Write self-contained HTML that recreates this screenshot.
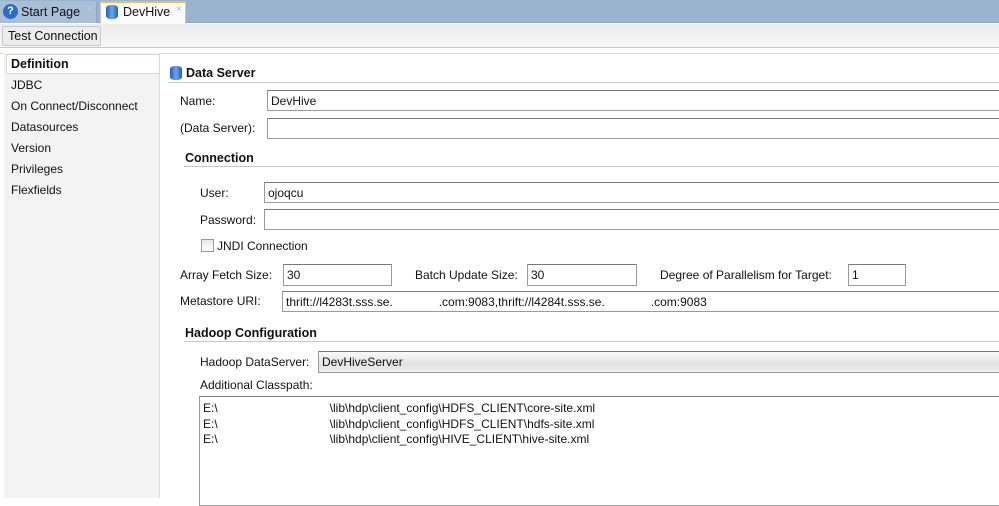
<!DOCTYPE html>
<html><head><meta charset="utf-8"><style>
*{margin:0;padding:0;box-sizing:border-box}
body{width:999px;height:498px;overflow:hidden;background:#fff;font-family:"Liberation Sans",sans-serif;font-size:12px;color:#111;position:relative}
.a{position:absolute;white-space:nowrap}
.in{position:absolute;border:1px solid #9a9a9a;border-top-color:#7a7a7a;background:#fff;padding-left:3px;line-height:20px}
.b{font-weight:bold;font-size:12.5px}
.ln{position:absolute;height:1px;background:#c8c8c8}
.l{transform:translateY(-50%)}
</style></head><body>
<div class="a" style="left:0;top:0;width:999px;height:23px;background:#9ab4d0;border-bottom:1px solid #8aa5c2"></div>
<div class="a" style="left:0;top:1px;width:97px;height:22px;background:#a9bfd8;border-right:1px solid #8ea8c4"></div>
<div class="a" style="left:3px;top:4px;width:15px;height:15px;border-radius:50%;background:#2b6cc4;color:#fff;font-weight:bold;font-size:11px;text-align:center;line-height:15px">?</div>
<div class="a" style="left:21px;top:5px;font-size:12.5px">Start Page</div>
<div class="a" style="left:87px;top:4px;color:#bcc;font-size:10px">×</div>
<div class="a" style="left:100px;top:1px;width:86px;height:23px;background:#fbfbfb;border:1px solid #c9c9c9;border-bottom:none;border-top:2px solid #e8c15a"></div>
<div class="a" style="left:106px;top:5px;width:12px;height:14px;border-radius:5px/3px;background:linear-gradient(90deg,#1e5fb8,#6aa6ec,#1e5fb8)"></div>
<div class="a" style="left:123px;top:5px;font-size:12.5px">DevHive</div>
<div class="a" style="left:176px;top:4px;color:#bbb;font-size:10px">×</div>
<div class="a" style="left:0;top:24px;width:999px;height:24px;background:linear-gradient(#ececec,#f9f9f9)"></div>
<div class="a" style="left:2px;top:26px;width:99px;height:20px;background:#ececec;border:1px solid #c8c8c8;border-radius:2px;padding:2px 5px;font-size:12.5px">Test Connection</div>
<div class="ln" style="left:0;top:47px;width:999px"></div>
<div class="ln" style="left:0;top:53px;width:999px;background:#d6d6d6"></div>
<div class="a" style="left:4px;top:53px;width:156px;height:445px;background:#f3f3f3;border-right:1px solid #ddd"></div>
<div class="a" style="left:6px;top:54px;width:154px;height:20px;background:#fff;border:1px solid #e2d6cc;border-radius:2px"></div>
<div class="a b l" style="left:11px;top:64px">Definition</div>
<div class="a l" style="left:11px;top:85px">JDBC</div>
<div class="a l" style="left:11px;top:106px">On Connect/Disconnect</div>
<div class="a l" style="left:11px;top:127px">Datasources</div>
<div class="a l" style="left:11px;top:148px">Version</div>
<div class="a l" style="left:11px;top:169px">Privileges</div>
<div class="a l" style="left:11px;top:190px">Flexfields</div>

<div class="a" style="left:170px;top:66px;width:12px;height:14px;border-radius:5px/3px;background:linear-gradient(90deg,#1e5fb8,#6aa6ec,#1e5fb8)"></div>
<div class="a b l" style="left:186px;top:73px">Data Server</div>
<div class="ln" style="left:168px;top:82px;width:831px"></div>
<div class="a l" style="left:180px;top:101px">Name:</div>
<div class="in" style="left:267px;top:90px;width:740px;height:21px">DevHive</div>
<div class="a l" style="left:180px;top:128px">(Data Server):</div>
<div class="in" style="left:267px;top:118px;width:740px;height:21px"></div>
<div class="a b l" style="left:185px;top:158px">Connection</div>
<div class="ln" style="left:184px;top:166px;width:815px"></div>
<div class="a l" style="left:200px;top:193px">User:</div>
<div class="in" style="left:264px;top:182px;width:740px;height:21px">ojoqcu</div>
<div class="a l" style="left:200px;top:220px">Password:</div>
<div class="in" style="left:264px;top:209px;width:740px;height:21px"></div>
<div class="a" style="left:201px;top:239px;width:13px;height:13px;border:1px solid #999;background:linear-gradient(#e8e8e8,#fff)"></div>
<div class="a l" style="left:217px;top:246px">JNDI Connection</div>
<div class="a l" style="left:180px;top:275px">Array Fetch Size:</div>
<div class="in" style="left:283px;top:264px;width:109px;height:22px">30</div>
<div class="a l" style="left:415px;top:275px">Batch Update Size:</div>
<div class="in" style="left:527px;top:264px;width:110px;height:22px">30</div>
<div class="a l" style="left:660px;top:275px">Degree of Parallelism for Target:</div>
<div class="in" style="left:848px;top:264px;width:58px;height:22px">1</div>
<div class="a l" style="left:180px;top:301px">Metastore URI:</div>
<div class="in" style="left:282px;top:291px;width:740px;height:21px">thrift://l4283t.sss.se.<span style="display:inline-block;width:46px"></span>.com:9083,thrift://l4284t.sss.se.<span style="display:inline-block;width:46px"></span>.com:9083</div>
<div class="a b l" style="left:185px;top:333px">Hadoop Configuration</div>
<div class="ln" style="left:184px;top:341px;width:815px"></div>
<div class="a l" style="left:200px;top:362px">Hadoop DataServer:</div>
<div class="in" style="left:318px;top:351px;width:700px;height:22px;background:linear-gradient(#fafafa,#e2e2e2 60%,#eee)">DevHiveServer</div>
<div class="a l" style="left:200px;top:385px">Additional Classpath:</div>
<div class="in" style="left:199px;top:396px;width:820px;height:110px;padding-top:4px;line-height:15.5px">E:\<span style="display:inline-block;width:112px"></span>\lib\hdp\client_config\HDFS_CLIENT\core-site.xml<br>E:\<span style="display:inline-block;width:112px"></span>\lib\hdp\client_config\HDFS_CLIENT\hdfs-site.xml<br>E:\<span style="display:inline-block;width:112px"></span>\lib\hdp\client_config\HIVE_CLIENT\hive-site.xml</div>
</body></html>
